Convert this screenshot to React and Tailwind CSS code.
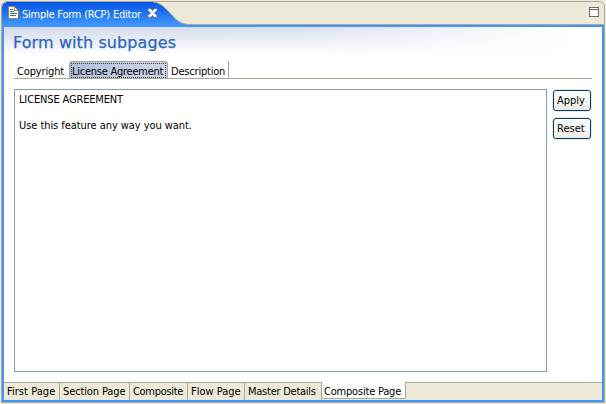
const ui = "font-['DejaVu_Sans_Condensed','DejaVu_Sans',sans-serif] [font-stretch:condensed]";

function DocumentIcon() {
  return (
    <svg width="11" height="13" viewBox="0 0 11 13" shapeRendering="crispEdges" className="shrink-0">
      <path d="M0 0H7V1H8V2H9V3H10V4H11V13H0Z" fill="#8b8360" />
      <path d="M1 1H6V5H10V12H1Z" fill="#fffff4" />
      <path d="M7 2H8V3H9V4H7Z" fill="#fffff4" />
      <path d="M2 3H5V4H2ZM2 5H6V6H2ZM2 7H9V8H2ZM2 9H8V10H2Z" fill="#39766f" />
    </svg>
  );
}

function CloseIcon() {
  return (
    <svg width="11" height="10" viewBox="0 0 11 10" className="shrink-0">
      <path d="M1 .5H3.5L5.5 2.5 7.5.5H10V2.5L7.5 5 10 7.5V9.5H7.5L5.5 7.5 3.5 9.5H1V7.5L3.5 5 1 2.5Z" fill="#fff" stroke="#6b6b70" strokeWidth=".8" />
    </svg>
  );
}

function TabShape() {
  return (
    <svg width="190" height="23" viewBox="0 0 190 23" className="col-start-1 row-start-1">
      <defs>
        <linearGradient id="tab" x1="0" y1="0" x2="0" y2="1">
          <stop offset="0" stopColor="#0355e2" />
          <stop offset="1" stopColor="#3f96ff" />
        </linearGradient>
      </defs>
      <path d="M0 23V5L1 2 3 .8 5 0H151C159 1 162 5 167 10S175 21 186 23Z" fill="url(#tab)" />
      <path d="M151 0C159 1 162 5 167 10S175 21 186 22.5H190" fill="none" stroke="#aca899" />
    </svg>
  );
}

function PushButton({ children }) {
  return (
    <button className="flex h-[21px] w-[38px] items-center rounded-[3px] border border-[#003c74] bg-linear-to-b from-white to-[#ecebe5] pl-[3px] whitespace-nowrap shadow-[0_0_0_1px_#ece9d8]">
      {children}
    </button>
  );
}

const pages = [
  ["First Page", "w-[56px] pl-[3px] tracking-[0.05px]"],
  ["Section Page", "w-[70px] pl-[3px] tracking-[-0.12px]"],
  ["Composite", "w-[58px] pl-[3px] tracking-[-0.3px]"],
  ["Flow Page", "w-[57px] pl-[3px]"],
  ["Master Details", "w-[77px] pl-[3px] tracking-[-0.25px]"],
];

export default function App() {
  return (
    <div className={`${ui} flex h-[404px] w-[606px] bg-[#ece9d8] p-px pb-px text-[11px] leading-[13px] text-black`}>
      <div className="flex h-[402px] w-[604px] flex-col overflow-hidden rounded-t-[6px] border border-[#aca899]">
        <header className="flex h-[23px] shrink-0 justify-between border-b border-[#aca899]">
          <div className="grid h-[23px]">
            <TabShape />
            <div className="col-start-1 row-start-1 flex items-start pt-[4px] pl-[6px] text-white">
              <DocumentIcon />
              <span className="mt-[2px] ml-[3px] w-[121px] whitespace-nowrap tracking-[-0.23px]">Simple Form (RCP) Editor</span>
              <span className="mt-[2px] ml-[4px]"><CloseIcon /></span>
            </div>
          </div>
          <div className="mt-[5px] mr-[5px] h-[10px] w-[10px] border border-[#6f6d62] bg-white">
            <div className="mt-px h-px bg-[#6f6d62]" />
          </div>
        </header>
        <main className="flex min-h-0 flex-1 flex-col border-2 border-[#3f96ff] bg-white">
          <div className="h-[34px] shrink-0 bg-[linear-gradient(to_bottom,rgba(255,255,255,0),white_28px),linear-gradient(to_right,#d3daeb,#d9dfee_50%,#eef1f8_75%,white_95%)] pt-[6px] pl-[9px]">
            <h1 className="font-['DejaVu_Sans',sans-serif] text-[16px] leading-[20px] tracking-[0.1px] whitespace-nowrap text-[#2a66c0] [-webkit-text-stroke:0.25px_#2a66c0] [font-stretch:normal]">Form with subpages</h1>
          </div>
          <nav className="mr-[10px] ml-[10px] flex h-[18px] shrink-0 border-b border-[#aca899] whitespace-nowrap">
            <div className="w-[55px] pt-[4px] pl-[3px] tracking-[-0.15px]">Copyright</div>
            <div className="h-[17px] w-[99px] rounded-t-[3px] border border-b-0 border-[#aca899] bg-linear-to-r from-[#b1bfdb] to-[#cdd6e8] px-px pt-px">
              <div className="h-[15px] border border-dotted border-[#40403a] pt-px tracking-[-0.25px]">License Agreement</div>
            </div>
            <div className="w-[61px] border-r border-[#aca899] pt-[4px] pl-[3px] tracking-[-0.2px]">Description</div>
          </nav>
          <div className="mt-[10px] ml-[10px] flex h-[283px] shrink-0 gap-[6px]">
            <div className="w-[533px] border border-[#7f9db9] pt-[3px] pl-[4px]">
              <p className="w-max tracking-[-0.15px]">LICENSE AGREEMENT</p>
              <p className="mt-[13px] w-max tracking-[-0.06px]">Use this feature any way you want.</p>
            </div>
            <div className="flex flex-col gap-[7px] pt-px">
              <PushButton>Apply</PushButton>
              <PushButton>Reset</PushButton>
            </div>
          </div>
          <nav className="mt-[10px] flex h-[18px] shrink-0 bg-[#ece9d8] whitespace-nowrap">
            {pages.map(([label, size]) => (
              <div key={label} className={`${size} border-t border-r border-[#aca899] pt-[2px]`}>{label}</div>
            ))}
            <div className="h-[17px] w-[84px] rounded-b-[2px] border-r border-b border-[#aca899] bg-white pt-[3px] pl-[2px] tracking-[-0.2px]">Composite Page</div>
            <div className="flex-1 border-t border-[#aca899]" />
          </nav>
        </main>
      </div>
    </div>
  );
}
